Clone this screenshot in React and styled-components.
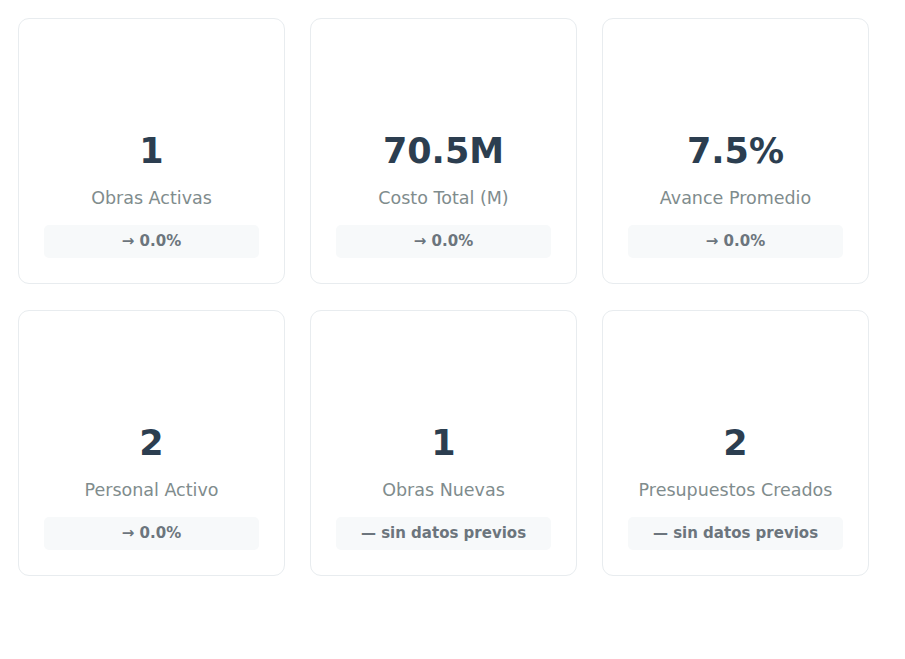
import React from 'react';
import styled, { createGlobalStyle } from 'styled-components';

const GlobalStyle = createGlobalStyle`
  body {
    margin: 8px;
    background: #ffffff;
    font-family: 'DejaVu Sans', sans-serif;
  }
`;

const Grid = styled.div`
  display: grid;
  grid-template-columns: repeat(3, 267px);
  grid-auto-rows: 266px;
  column-gap: 25px;
  row-gap: 26px;
  padding: 10px;
`;

const Card = styled.div`
  display: flex;
  flex-direction: column;
  justify-content: flex-end;
  align-items: stretch;
  box-sizing: border-box;
  padding: 25px;
  background: #fff;
  border: 1px solid #e8ecef;
  border-radius: 11px;
  text-align: center;
`;

const Value = styled.div`
  font-size: 35px;
  font-weight: 700;
  color: #2c3e50;
  line-height: 42px;
`;

const Label = styled.div`
  margin-top: 16px;
  font-size: 17.5px;
  line-height: 21px;
  color: #7f8c8d;
`;

const Trend = styled.div`
  margin-top: 16px;
  padding: 8px;
  background: #f7f9fa;
  border-radius: 5px;
  font-size: 15px;
  line-height: 17px;
  font-weight: 700;
  color: #6c757d;
`;

const stats = [
  { value: '1', label: 'Obras Activas', trend: '→ 0.0%' },
  { value: '70.5M', label: 'Costo Total (M)', trend: '→ 0.0%' },
  { value: '7.5%', label: 'Avance Promedio', trend: '→ 0.0%' },
  { value: '2', label: 'Personal Activo', trend: '→ 0.0%' },
  { value: '1', label: 'Obras Nuevas', trend: '— sin datos previos' },
  { value: '2', label: 'Presupuestos Creados', trend: '— sin datos previos' },
];

export default function App() {
  return (
    <>
      <GlobalStyle />
      <Grid>
        {stats.map((s, i) => (
          <Card key={i}>
            <Value>{s.value}</Value>
            <Label>{s.label}</Label>
            <Trend>{s.trend}</Trend>
          </Card>
        ))}
      </Grid>
    </>
  );
}
